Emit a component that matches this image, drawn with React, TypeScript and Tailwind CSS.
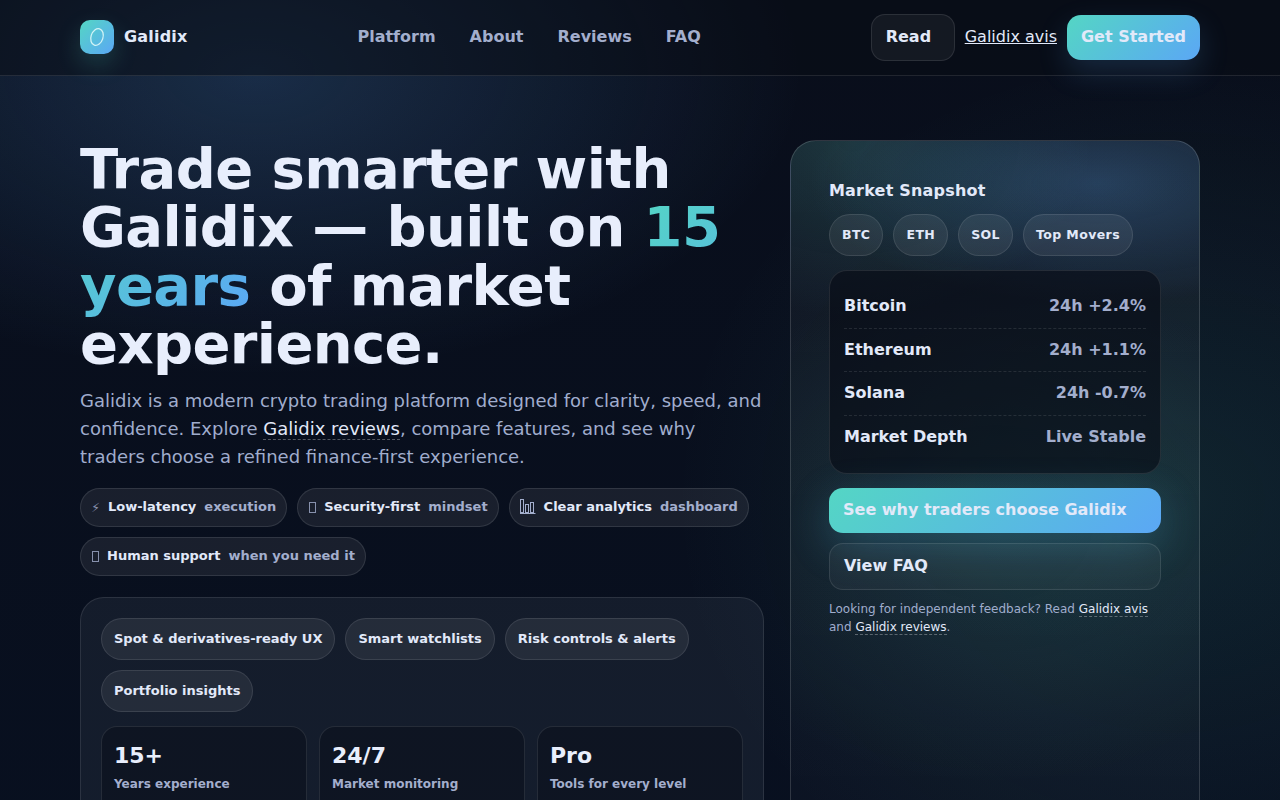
import React from "react";

const Tofu = () => (
  <span className="mt-[2px] flex h-[11px] w-2 justify-end">
    <span className="h-[11px] w-[7px] border border-[#a3aecd]/80" />
  </span>
);

const Bars = () => (
  <svg width="16" height="15" viewBox="0 0 16 15" fill="none" stroke="#a3aecd" strokeWidth="1">
    <rect x="0.5" y="0.5" width="3" height="13" />
    <rect x="5.5" y="5.5" width="3" height="8" />
    <rect x="10.5" y="3.5" width="3" height="10" />
    <path d="M0 14.5H15.5" />
  </svg>
);

const badges = [
  { icon: <span className="mt-[2px] w-[9px] font-normal text-[#a3aecd]/80">⚡</span>, strong: "Low-latency", muted: "execution" },
  { icon: <Tofu />, strong: "Security-first", muted: "mindset" },
  { icon: <Bars />, strong: "Clear analytics", muted: "dashboard" },
  { icon: <Tofu />, strong: "Human support", muted: "when you need it" },
];

const features = ["Spot & derivatives-ready UX", "Smart watchlists", "Risk controls & alerts", "Portfolio insights"];

const stats = [
  { value: "15+", label: "Years experience" },
  { value: "24/7", label: "Market monitoring" },
  { value: "Pro", label: "Tools for every level" },
];

const markets = [
  { name: "Bitcoin", value: "24h +2.4%" },
  { name: "Ethereum", value: "24h +1.1%" },
  { name: "Solana", value: "24h -0.7%" },
  { name: "Market Depth", value: "Live Stable" },
];

const App = () => {
  return (
    <div className="min-h-screen overflow-hidden bg-[radial-gradient(760px_420px_at_20%_8%,rgba(91,167,245,0.2),transparent_72%),radial-gradient(700px_620px_at_92%_55%,rgba(84,214,196,0.1),transparent_72%),linear-gradient(180deg,#090e1b,#081020)] font-['DejaVu_Sans',sans-serif] text-[#e2e9f9]">
      {/* Header */}
      <header className="h-[76px] border-b border-white/10 bg-[#070b14]/50">
        <div className="mx-auto flex h-[75px] w-[1120px] items-center justify-between">
          <a className="mb-px flex items-center gap-2.5 text-base font-bold tracking-[0.2px]">
            <span className="flex h-[34px] w-[34px] items-center justify-center rounded-[10px] bg-[linear-gradient(135deg,#54d6c4,#5ba7f5)] shadow-[0_10px_24px_rgba(84,214,196,0.2)]">
              <svg width="20" height="22" viewBox="0 0 20 22" fill="none">
                <ellipse cx="10" cy="11" rx="6" ry="8.6" transform="rotate(18 10 11)" stroke="#d2f3f6" strokeWidth="1.3" />
              </svg>
            </span>
            Galidix
          </a>
          <nav className="mb-[2px] flex items-center gap-[34px] text-base font-bold text-[#a3aecd]">
            <a>Platform</a>
            <a>About</a>
            <a>Reviews</a>
            <a>FAQ</a>
          </nav>
          <div className="flex items-center gap-2.5">
            <a className="flex h-[47px] w-[84px] items-center rounded-[14px] border border-white/10 bg-white/5 pb-[2px] pl-[14px] text-base font-bold">
              Read
            </a>
            <a className="mb-[2px] text-base underline">Galidix avis</a>
            <a className="flex h-[45px] w-[133px] items-center justify-center rounded-[14px] bg-[linear-gradient(135deg,#54d6c4,#5ba7f5)] pb-[2px] text-base font-bold shadow-[0_12px_30px_rgba(91,167,245,0.18)]">
              Get Started
            </a>
          </div>
        </div>
      </header>

      {/* Hero */}
      <main className="mx-auto grid w-[1120px] grid-cols-[684px_410px] gap-[26px] pb-16 pt-[64px]">
        <section>
          <h1 className="text-[56px] font-bold leading-[58.4px] tracking-[-0.6px] text-[#e8eefc]">
            Trade smarter with Galidix — built on{" "}
            <span className="bg-[linear-gradient(135deg,#54d6c4,#5ba7f5)] bg-clip-text text-transparent">15 years</span> of market
            experience.
          </h1>
          <p className="mt-[13.2px] text-lg leading-7 text-[#a0adcd]">
            Galidix is a modern crypto trading platform designed for clarity, speed, and confidence. Explore{" "}
            <a className="border-b border-dashed border-white/30 text-[#e2e9f9]">Galidix reviews</a>, compare features, and see why
            traders choose a refined finance-first experience.
          </p>

          <div className="mt-[17.4px] flex flex-wrap gap-2.5">
            {badges.map((b) => (
              <div
                key={b.strong}
                className="flex h-[39px] items-center gap-2 rounded-full border border-white/10 bg-white/[0.07] px-[10px] pb-[2px] text-[13px] font-bold"
              >
                {b.icon}
                <span>{b.strong}</span>
                <span className="text-[#a3aecd]">{b.muted}</span>
              </div>
            ))}
          </div>

          <div className="mt-[21px] rounded-[24px] border border-white/10 bg-[#dfe8fc]/[0.06] p-5">
            <div className="flex flex-wrap gap-2.5">
              {features.map((f) => (
                <span
                  key={f}
                  className="flex h-[42px] items-center rounded-full border border-white/10 bg-white/[0.07] px-3 text-[13px] font-bold"
                >
                  {f}
                </span>
              ))}
            </div>
            <div className="mt-[14px] grid grid-cols-3 gap-3">
              {stats.map((s) => (
                <div key={s.label} className="h-[100px] rounded-2xl border border-white/10 bg-[#060a14]/40 px-3 pt-[15px]">
                  <div className="text-[22px] font-bold leading-7 text-[#e8eefc]">{s.value}</div>
                  <div className="mt-1.5 text-xs font-bold text-[#a3aecd]">{s.label}</div>
                </div>
              ))}
            </div>
          </div>
        </section>

        {/* Market snapshot */}
        <aside className="rounded-[26px] border border-white/15 bg-[radial-gradient(360px_150px_at_75%_6%,rgba(91,167,245,0.25),transparent_80%),radial-gradient(300px_220px_at_15%_0%,rgba(84,214,196,0.16),transparent_80%),radial-gradient(420px_320px_at_50%_55%,rgba(84,214,196,0.1),transparent_80%),linear-gradient(180deg,rgba(255,255,255,0.04),rgba(255,255,255,0.02))] px-[38px] pt-[40px]">
          <h2 className="text-base font-bold leading-5 tracking-[0.2px]">Market Snapshot</h2>
          <div className="mt-[13px] flex gap-2.5">
            {["BTC", "ETH", "SOL", "Top Movers"].map((t) => (
              <span key={t} className="flex h-[42px] items-center rounded-full border border-white/10 bg-white/[0.07] px-3 text-[12.5px] font-bold tracking-[0.4px]">
                {t}
              </span>
            ))}
          </div>
          <div className="mt-[14px] h-[204px] rounded-[18px] border border-white/10 bg-[#060a14]/60 px-[14px] pt-[14px]">
            {markets.map((m, i) => (
              <div
                key={m.name}
                className={`flex h-[43.6px] items-center justify-between border-b border-dashed text-base font-bold ${i < 3 ? "border-white/10" : "border-transparent"}`}
              >
                <span>{m.name}</span>
                <span className="text-[#a3aecd]">{m.value}</span>
              </div>
            ))}
          </div>
          <a className="mt-[14px] flex h-[45px] items-center rounded-[14px] bg-[linear-gradient(135deg,#54d6c4,#5ba7f5)] px-[14px] pb-[2px] text-base font-bold shadow-[0_12px_40px_rgba(84,190,230,0.25)]">
            See why traders choose Galidix
          </a>
          <a className="mt-2.5 flex h-[47px] items-center rounded-[14px] border border-white/10 bg-white/[0.04] px-[14px] pb-[2px] text-base font-bold">
            View FAQ
          </a>
          <p className="mt-2.5 text-xs leading-[18px] text-[#a0adcd]">
            Looking for independent feedback? Read{" "}
            <a className="border-b border-dashed border-white/30 text-[#e2e9f9]">Galidix avis</a> and{" "}
            <a className="border-b border-dashed border-white/30 text-[#e2e9f9]">Galidix reviews</a>.
          </p>
        </aside>
      </main>
    </div>
  );
};

export default App;
